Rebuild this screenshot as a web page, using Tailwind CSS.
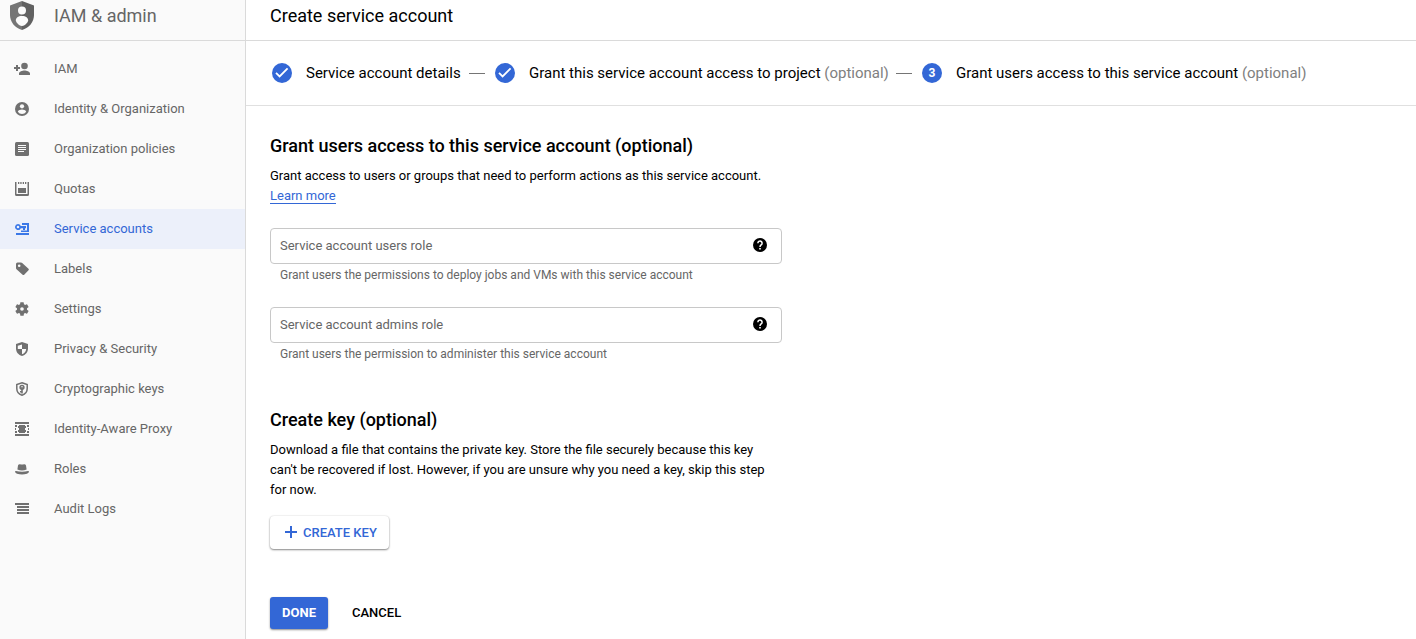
<!DOCTYPE html>
<html lang="en">
<head>
<meta charset="utf-8">
<title>Create service account</title>
<script src="https://cdn.jsdelivr.net/npm/@tailwindcss/browser@4"></script>
</head>
<body class="flex h-[639px] overflow-hidden bg-white font-['Roboto',sans-serif] text-[13px] text-black">
<aside class="flex w-[246px] shrink-0 flex-col border-r border-[#dadada] bg-[#fafafa] text-[#666666]">
  <header class="flex h-[41px] items-start border-b border-[#dadada] pl-[10px]">
    <svg class="mt-px h-[29px] w-6 shrink-0" viewBox="0 0 24 29">
      <path fill="#757575" d="M12 0L0 4.6V14c0 7 5 13 12 15z"/>
      <path fill="#616161" d="M12 0l12 4.6V14c0 7-5 13-12 15z"/>
      <circle cx="12" cy="9.4" r="4" fill="#fafafa"/>
      <path fill="#fafafa" d="M12 15c4 0 6.2 2 6.2 4.600 0 1-2.700 5.400-6.200 5.400s-6.200-4.400-6.200-5.400C5.800 17 8 15 12 15z"/>
    </svg>
    <h1 class="ml-5 whitespace-nowrap text-[18px] leading-[31px] font-normal">IAM &amp; admin</h1>
  </header>
  <nav class="flex flex-col pt-2">
    <a class="flex h-10 items-center gap-6 pl-[14px]"><svg class="size-4" viewBox="0 0 16 16" fill="#707070"><circle cx="10.500" cy="5" r="3.300"/><path d="M5 14v-1.500C5 10.500 8.500 9.500 10.500 9.500S16 10.500 16 12.500V14zM2 4h2v2h2v2H4v2H2V8H0V6h2z"/></svg><span>IAM</span></a>
    <a class="flex h-10 items-center gap-6 pl-[14px]"><svg class="size-4" viewBox="0 0 16 16"><circle cx="8" cy="8" r="7" fill="#707070"/><circle cx="8" cy="5.300" r="2.100" fill="#fafafa"/><path fill="#fafafa" d="M3.800 10.700C3.900 9.300 6.600 8.500 8 8.500s4.100.8 4.200 2.200A5 5 0 0 1 8 13a5 5 0 0 1-4.200-2.300z"/></svg><span>Identity &amp; Organization</span></a>
    <a class="flex h-10 items-center gap-6 pl-[14px]"><svg class="size-4" viewBox="0 0 16 16"><rect x="1" y="1" width="14" height="14" rx="1.500" fill="#707070"/><path stroke="#fafafa" d="M4 4.500h8M4 6.500h8M4 8.500h8M4 10.500h6"/></svg><span>Organization policies</span></a>
    <a class="flex h-10 items-center gap-6 pl-[14px]"><svg class="size-4" viewBox="0 0 16 16" fill="#707070"><path fill-rule="evenodd" d="M1 1h1.500v12h11V1H15v12.500q0 1.500-1.500 1.500h-11Q1 15 1 13.500zM4 1h1.300v2H4zM6.300 1h1.300v2H6.300zM8.700 1H10v2H8.700zM11 1h1.300v2H11zM4 7h8v5H4z"/></svg><span>Quotas</span></a>
    <a class="flex h-10 items-center gap-6 bg-[#ecf0fa] pl-[14px] text-[#3367d6]"><svg class="size-4" viewBox="0 0 16 16" fill="#3b78e7"><path fill-rule="evenodd" d="M4 3a3 3 0 0 1 2.800 2H12v2.200h-1V9H9V7.200H6.800A3 3 0 1 1 4 3zm0 1.700a1.300 1.300 0 1 0 0 2.600 1.300 1.300 0 0 0 0-2.600zM8 2h7v9H7V9.500h6V4H8zM2 12h13v2H2z"/></svg><span>Service accounts</span></a>
    <a class="flex h-10 items-center gap-6 pl-[14px]"><svg class="size-4" viewBox="0 0 16 16" fill="#707070"><path fill-rule="evenodd" d="M3.500 1.500H7q.7 0 1.200.4l6.300 5.800q.8.800 0 1.600l-4.300 4.400q-.8.700-1.600 0L2.500 8.200Q2 7.700 2 7V3q0-1.500 1.500-1.500zm1.700 2a1.300 1.300 0 1 0 0 2.600 1.300 1.300 0 0 0 0-2.600z"/></svg><span>Labels</span></a>
    <a class="flex h-10 items-center gap-6 pl-[14px]"><svg class="size-4" viewBox="0.600 0.600 22.800 22.800" fill="#707070"><path d="M19.140 12.940c.04-.3.060-.61.060-.94 0-.32-.02-.64-.07-.94l2.030-1.580a.49.49 0 0 0 .12-.61l-1.920-3.320a.488.488 0 0 0-.59-.22l-2.390.96c-.5-.38-1.030-.7-1.620-.94l-.36-2.540a.484.484 0 0 0-.48-.41h-3.840c-.24 0-.43.17-.47.41l-.36 2.540c-.59.240-1.130.57-1.620.94l-2.390-.96c-.22-.08-.47 0-.59.220L2.740 8.870c-.12.210-.08.470.120.610l2.030 1.580c-.05.300-.09.630-.09.940s.02.640.07.940l-2.030 1.580a.49.49 0 0 0-.12.610l1.920 3.320c.12.220.37.290.59.220l2.390-.96c.5.380 1.030.700 1.620.940l.36 2.540c.05.240.24.410.48.410h3.840c.24 0 .44-.17.47-.41l.36-2.540c.59-.24 1.130-.56 1.620-.94l2.390.96c.22.080.47 0 .59-.22l1.920-3.320c.12-.22.070-.47-.12-.61l-2.010-1.580zM12 14.600a2.600 2.600 0 1 1 0-5.200 2.600 2.600 0 0 1 0 5.200z"/></svg><span>Settings</span></a>
    <a class="flex h-10 items-center gap-6 pl-[14px]"><svg class="size-4" viewBox="0 0 16 16"><path fill="#707070" d="M8 1l6 2v4.500c0 3.500-2.400 6.500-6 7.500-3.600-1-6-4-6-7.500V3z"/><path fill="#fafafa" d="M8 3.500V8H3.800V4.800zM8 8h4.200C12 10.500 10.500 12.500 8 13.300z"/></svg><span>Privacy &amp; Security</span></a>
    <a class="flex h-10 items-center gap-6 pl-[14px]"><svg class="size-4" viewBox="0 0 16 16" fill="none" stroke="#707070"><path stroke-width="1.500" d="M8 1.800l5.200 1.800v4c0 3-2 5.600-5.200 6.600-3.200-1-5.200-3.600-5.200-6.600v-4z"/><circle cx="8" cy="6.300" r="1.900" stroke-width="1.500"/><path stroke-width="1.600" d="M8 6v6.500M8 10.700H6"/></svg><span>Cryptographic keys</span></a>
    <a class="flex h-10 items-center gap-6 pl-[14px]"><svg class="size-4" viewBox="0 0 16 16" fill="#707070" shape-rendering="crispEdges"><path d="M1 1h14v2H1zM1 13h14v2H1zM5 4h6v1h1v2h-1v2h1v2h-1v1H5v-1H4V9h1V7H4V5h1zM1 4h2v2H1zM1 7h1v2H1zM1 10h2v2H1zM13 4h2v2h-2zM14 7h1v2h-1zM13 10h2v2h-2z"/></svg><span>Identity-Aware Proxy</span></a>
    <a class="flex h-10 items-center gap-6 pl-[14px]"><svg class="size-4" viewBox="0 0 16 16" fill="#707070"><path d="M3.400 8.500L4 4.500Q4.500 3 6 3.200q2 .6 4 0 1.500-.2 2 1.300l.6 4Q8 10.300 3.400 8.500zM1 10.500q0-.7 1-.6 6 1.600 12 0 1-.1 1 .6 0 1.300-2 2.200Q8 14.300 3 12.700q-2-.9-2-2.200z"/></svg><span>Roles</span></a>
    <a class="flex h-10 items-center gap-6 pl-[14px]"><svg class="size-4" viewBox="0 0 16 16" fill="#707070" shape-rendering="crispEdges"><path d="M1 2h14v2H1zM3 5h12v2H3zM3 8h12v2H3zM3 11h12v2H3z"/></svg><span>Audit Logs</span></a>
  </nav>
</aside>
<main class="flex min-w-0 grow flex-col">
  <header class="h-[41px] shrink-0 border-b border-[#dadada] pl-6 text-[18px] leading-[31px]">Create service account</header>
  <div class="flex h-[65px] shrink-0 items-center border-b border-[#e0e0e0] pl-[26px] text-[15px] whitespace-nowrap">
    <svg class="mr-[14px] size-5 shrink-0" viewBox="0 0 20 20"><circle cx="10" cy="10" r="10" fill="#3367d6"/><path fill="none" stroke="#fff" stroke-width="1.800" d="M4 9.800l3.600 3.600 8-8"/></svg>
    <span class="w-[155px] shrink-0">Service account details</span>
    <span class="mx-2 h-px w-4 shrink-0 bg-[#757575]"></span>
    <svg class="mr-[14px] ml-0.5 size-5 shrink-0" viewBox="0 0 20 20"><circle cx="10" cy="10" r="10" fill="#3367d6"/><path fill="none" stroke="#fff" stroke-width="1.800" d="M4 9.800l3.600 3.600 8-8"/></svg>
    <span class="w-[359px] shrink-0">Grant this service account access to project <span class="text-[#808080]">(optional)</span></span>
    <span class="mx-2 h-px w-4 shrink-0 bg-[#757575]"></span>
    <span class="mr-[14px] ml-0.5 flex size-5 shrink-0 items-center justify-center rounded-full bg-[#3367d6] text-[12px] font-bold text-white">3</span>
    <span>Grant users access to this service account <span class="text-[#808080]">(optional)</span></span>
  </div>
  <section class="flex w-[560px] flex-col items-start pt-7 pl-6">
    <h2 class="text-[18px] leading-6 font-medium whitespace-nowrap">Grant users access to this service account (optional)</h2>
    <p class="mt-2 leading-5 whitespace-nowrap">Grant access to users or groups that need to perform actions as this service account.</p>
    <a class="mt-[3px] h-[15px] border-b border-[#3367d6] leading-[14px] text-[#3367d6]">Learn more</a>
    <div class="mt-6 flex h-9 w-[512px] items-center justify-between rounded border border-[#c8c8c8] pr-3.5 pl-[9px] text-[#666666]"><span>Service account users role</span>
      <svg class="mb-0.5 size-[14px]" viewBox="0 0 14 14"><circle cx="7" cy="7" r="7"/><path fill="none" stroke="#fff" stroke-width="1.500" d="M4.900 5.200a2.100 2.100 0 1 1 3.500 1.500Q7 7.700 7 9"/><path fill="#fff" d="M6.200 10h1.600v1.500H6.200z"/></svg></div>
    <p class="mt-0.5 pl-[10px] text-[12px] leading-[18px] text-[#666666]">Grant users the permissions to deploy jobs and VMs with this service account</p>
    <div class="mt-[23px] flex h-9 w-[512px] items-center justify-between rounded border border-[#c8c8c8] pr-3.5 pl-[9px] text-[#666666]"><span>Service account admins role</span>
      <svg class="mb-0.5 size-[14px]" viewBox="0 0 14 14"><circle cx="7" cy="7" r="7"/><path fill="none" stroke="#fff" stroke-width="1.500" d="M4.900 5.200a2.100 2.100 0 1 1 3.500 1.500Q7 7.700 7 9"/><path fill="#fff" d="M6.200 10h1.600v1.500H6.200z"/></svg></div>
    <p class="mt-0.5 pl-[10px] text-[12px] leading-[18px] text-[#666666]">Grant users the permission to administer this service account</p>
    <h2 class="mt-[45px] text-[18px] leading-6 font-medium">Create key (optional)</h2>
    <p class="mt-2 leading-5 whitespace-nowrap">Download a file that contains the private key. Store the file securely because this key<br>can't be recovered if lost. However, if you are unsure why you need a key, skip this step<br>for now.</p>
    <button class="mt-4 flex h-[33px] w-[119px] items-center rounded-[4px] bg-white pl-[15px] font-medium whitespace-nowrap text-[#3367d6] shadow-[0_1px_2px_rgba(0,0,0,0.45),0_0_2px_rgba(0,0,0,0.12)]"><svg class="mr-1.5 mb-[1px] size-3" viewBox="0 0 12 12" fill="#3367d6"><path d="M5 0h2v5h5v2H7v5H5V7H0V5h5z"/></svg>CREATE KEY</button>
    <div class="mt-12 flex items-center font-medium"><button class="h-8 w-[58px] rounded-[3px] bg-[#3367d6] font-bold text-white shadow-[0_1px_2px_rgba(0,0,0,0.45)]">DONE</button><button class="ml-6">CANCEL</button></div>
  </section>
</main>
</body>
</html>
